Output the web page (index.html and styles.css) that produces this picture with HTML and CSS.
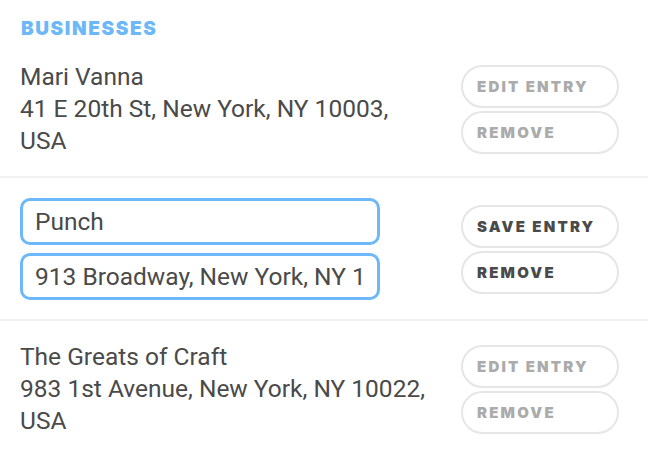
FILE: index.html
```html
<!DOCTYPE html>
<html lang="en">
<head>
<meta charset="utf-8">
<title>Businesses</title>
<link rel="stylesheet" href="styles.css">
</head>
<body>
<section class="panel">
  <h2 class="panel-title">BUSINESSES</h2>
  <ul class="list">
    <li class="row">
      <div class="info">
        <div class="name">Mari Vanna</div>
        <div class="addr">41 E 20th St, New York, NY 10003, USA</div>
      </div>
      <div class="actions">
        <button class="btn btn-muted">EDIT ENTRY</button>
        <button class="btn btn-muted">REMOVE</button>
      </div>
    </li>
    <li class="row">
      <div class="info fields">
        <input class="field" type="text" value="Punch">
        <input class="field" type="text" value="913 Broadway, New York, NY 10003, USA">
      </div>
      <div class="actions">
        <button class="btn btn-dark">SAVE ENTRY</button>
        <button class="btn btn-dark">REMOVE</button>
      </div>
    </li>
    <li class="row">
      <div class="info">
        <div class="name">The Greats of Craft</div>
        <div class="addr">983 1st Avenue, New York, NY 10022, USA</div>
      </div>
      <div class="actions">
        <button class="btn btn-muted">EDIT ENTRY</button>
        <button class="btn btn-muted">REMOVE</button>
      </div>
    </li>
  </ul>
</section>
</body>
</html>
```

FILE: styles.css
```css
* { box-sizing: border-box; }
html, body {
  margin: 0;
  padding: 0;
  background: #ffffff;
}
body {
  font-family: Roboto, "Liberation Sans", sans-serif;
  color: #4a4a4a;
}
.panel {
  width: 648px;
}
.panel-title {
  margin: 0;
  padding: 18px 0 0 21px;
  height: 41px;
  font-family: Inter, "Liberation Sans", sans-serif;
  font-weight: 900;
  font-size: 19px;
  line-height: 22px;
  letter-spacing: 1.6px;
  color: #6cb8f8;
}
.list {
  list-style: none;
  margin: 0;
  padding: 0;
}
.row {
  display: flex;
  align-items: center;
  padding: 20px 29px 19px 20px;
  border-bottom: 2px solid #f0f0f0;
}
.row:last-child {
  border-bottom: none;
}
.info {
  width: 410px;
  font-size: 24.5px;
  line-height: 32px;
  color: #4a4a4a;
}
.fields {
  width: 360px;
  display: flex;
  flex-direction: column;
  gap: 8px;
}
.field {
  display: block;
  width: 360px;
  height: 47px;
  margin: 0;
  padding: 0 11px 0 12px;
  border: 3px solid #6cb8f8;
  border-radius: 10px;
  background: #ffffff;
  font-family: Roboto, "Liberation Sans", sans-serif;
  font-size: 24.5px;
  color: #4a4a4a;
  outline: none;
}
.actions {
  margin-left: auto;
  display: flex;
  flex-direction: column;
  gap: 3px;
}
.btn {
  display: block;
  width: 158px;
  height: 43px;
  margin: 0;
  padding: 0 0 0 14px;
  text-align: left;
  background: #ffffff;
  border: 2px solid #e6e6e6;
  border-radius: 22px;
  font-family: Inter, "Liberation Sans", sans-serif;
  font-weight: 900;
  font-size: 15px;
  letter-spacing: 2.2px;
  cursor: pointer;
}
.btn-muted { color: #ababab; }
.btn-dark { color: #4a4a4a; }
```
